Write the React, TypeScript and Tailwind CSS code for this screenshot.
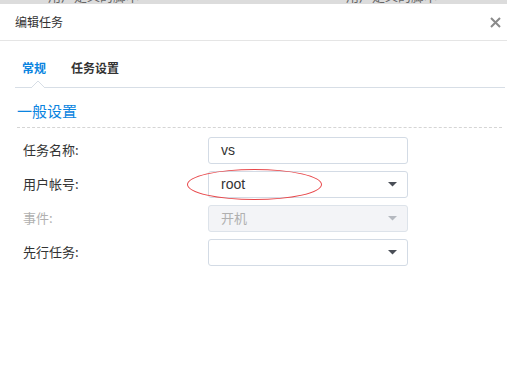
const cjk = "font-['Noto_Sans_CJK_SC','Noto_Sans',sans-serif]";

function Caret({ disabled = false }: { disabled?: boolean }) {
  return (
    <svg width="9" height="5" viewBox="0 0 9 5" className="shrink-0">
      <path d="M0 0 H9 L4.5 4.5 Z" fill={disabled ? "#b5b9c0" : "#4a4f57"} />
    </svg>
  );
}

function Field({ label, children, disabled = false }: { label: string; children: React.ReactNode; disabled?: boolean }) {
  return (
    <div className="flex items-center h-[27px] mb-[7px]">
      <div className={`w-[208px] pl-[23px] text-[13px] ${disabled ? "text-[#b0b0b0]" : "text-[#333]"}`}>{label}</div>
      {children}
    </div>
  );
}

export default function App() {
  return (
    <div className={`w-[507px] h-[374px] bg-white overflow-hidden relative ${cjk}`}>
      {/* window behind, clipped */}
      <div className="h-[4px] bg-[#dcdcdc] overflow-hidden relative">
        <div className="flex text-[13px] text-[#666] leading-none -mt-[11px]">
          <span className="ml-[48px]">用户定义的脚本</span>
          <span className="ml-[207px]">用户定义的脚本</span>
        </div>
      </div>

      {/* header */}
      <div className="flex items-center justify-between h-[37px] pl-[15px] pr-[6px] border-b border-[#e5e5e5]">
        <span className="text-[12px] text-[#333]">编辑任务</span>
        <svg width="11" height="11" viewBox="0 0 11 11">
          <path d="M1 1 L10 10 M10 1 L1 10" stroke="#8a8a8a" strokeWidth="2" />
        </svg>
      </div>

      {/* tabs */}
      <div className="ml-[15px] mr-[2px] mt-[18px] relative border-b border-[#d7dee6] flex gap-[25px] pl-[7px] pb-[10px]">
        <span className="text-[12px] font-bold text-[#0a84e0]">常规</span>
        <span className="text-[12px] font-bold text-[#333]">任务设置</span>
        <svg width="14" height="7" viewBox="0 0 14 7" className="absolute left-[16px] bottom-[-1px]">
          <path d="M0 7 L7 0 L14 7" fill="white" stroke="#d7dee6" strokeWidth="1" />
        </svg>
      </div>

      {/* section title */}
      <div className="ml-[17px] mr-[5px] mt-[10px] border-b border-dashed border-[#d5d5d5] pb-[4px]">
        <span className="text-[15px] text-[#0a84e0]">一般设置</span>
      </div>

      <div className="mt-[9px]">
        <Field label="任务名称:">
          <div className="w-[200px] h-[27px] border border-[#d3dbe5] rounded-[3px] flex items-center px-[12px] text-[14px] text-[#333] font-['Liberation_Sans',sans-serif]">
            vs
          </div>
        </Field>
        <Field label="用户帐号:">
          <div className="w-[200px] h-[27px] border border-[#d3dbe5] rounded-[3px] flex items-center justify-between pl-[12px] pr-[10px] text-[14px] text-[#333] font-['Liberation_Sans',sans-serif]">
            root
            <Caret />
          </div>
        </Field>
        <Field label="事件:" disabled>
          <div className="w-[200px] h-[27px] border border-[#dde3ea] bg-[#f3f4f7] rounded-[3px] flex items-center justify-between pl-[12px] pr-[10px] text-[13px] text-[#b0b0b0]">
            开机
            <Caret disabled />
          </div>
        </Field>
        <Field label="先行任务:">
          <div className="w-[200px] h-[27px] border border-[#d3dbe5] rounded-[3px] flex items-center justify-end pr-[10px]">
            <Caret />
          </div>
        </Field>
      </div>

      {/* red annotation ellipse */}
      <div className="absolute left-[187px] top-[169px] w-[135px] h-[31px] rounded-[50%] border border-[#e8474a]" />
    </div>
  );
}
